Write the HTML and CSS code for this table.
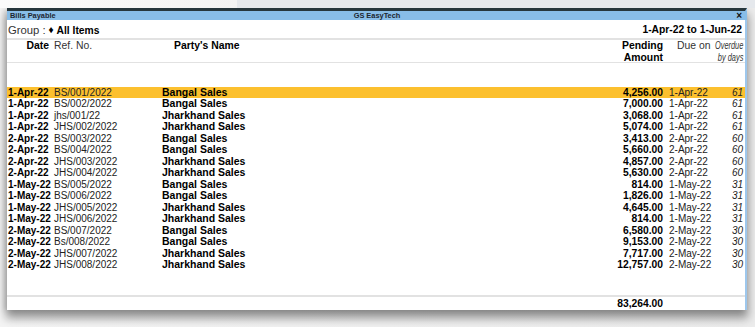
FILE: index.html
```html
<!DOCTYPE html>
<html>
<head>
<meta charset="utf-8">
<link rel="stylesheet" href="styles.css">
</head>
<body>
<div class="desk-top"><div class="desk-left"></div><div class="desk-right"></div></div>
<div class="window">
  <div class="titlebar">
    <span class="t-left">Bills Payable</span>
    <span class="t-center">GS EasyTech</span>
    <span class="t-right">×</span>
  </div>
  <div class="group-row">
    <div class="group"><span class="g-label">Group :</span> <span class="diamond">♦</span> <b>All Items</b></div>
    <div class="period">1-Apr-22 to 1-Jun-22</div>
  </div>
  <div class="sep"></div>
  <div class="grid head">
    <div class="h-date">Date</div>
    <div class="h-ref">Ref. No.</div>
    <div class="h-party">Party's Name</div>
    <div class="h-amt">Pending<br>Amount</div>
    <div class="h-due">Due on</div>
    <div class="h-over"><span>Overdue<br>by days</span></div>
  </div>
  <div class="sep thin"></div>
  <div class="body">
    <div class="grid row sel"><div class="c-date">1-Apr-22</div><div class="c-ref">BS/001/2022</div><div class="c-party">Bangal Sales</div><div class="c-amt">4,256.00</div><div class="c-due">1-Apr-22</div><div class="c-over">61</div></div>
    <div class="grid row"><div class="c-date">1-Apr-22</div><div class="c-ref">BS/002/2022</div><div class="c-party">Bangal Sales</div><div class="c-amt">7,000.00</div><div class="c-due">1-Apr-22</div><div class="c-over">61</div></div>
    <div class="grid row"><div class="c-date">1-Apr-22</div><div class="c-ref">jhs/001/22</div><div class="c-party">Jharkhand Sales</div><div class="c-amt">3,068.00</div><div class="c-due">1-Apr-22</div><div class="c-over">61</div></div>
    <div class="grid row"><div class="c-date">1-Apr-22</div><div class="c-ref">JHS/002/2022</div><div class="c-party">Jharkhand Sales</div><div class="c-amt">5,074.00</div><div class="c-due">1-Apr-22</div><div class="c-over">61</div></div>
    <div class="grid row"><div class="c-date">2-Apr-22</div><div class="c-ref">BS/003/2022</div><div class="c-party">Bangal Sales</div><div class="c-amt">3,413.00</div><div class="c-due">2-Apr-22</div><div class="c-over">60</div></div>
    <div class="grid row"><div class="c-date">2-Apr-22</div><div class="c-ref">BS/004/2022</div><div class="c-party">Bangal Sales</div><div class="c-amt">5,660.00</div><div class="c-due">2-Apr-22</div><div class="c-over">60</div></div>
    <div class="grid row"><div class="c-date">2-Apr-22</div><div class="c-ref">JHS/003/2022</div><div class="c-party">Jharkhand Sales</div><div class="c-amt">4,857.00</div><div class="c-due">2-Apr-22</div><div class="c-over">60</div></div>
    <div class="grid row"><div class="c-date">2-Apr-22</div><div class="c-ref">JHS/004/2022</div><div class="c-party">Jharkhand Sales</div><div class="c-amt">5,630.00</div><div class="c-due">2-Apr-22</div><div class="c-over">60</div></div>
    <div class="grid row"><div class="c-date">1-May-22</div><div class="c-ref">BS/005/2022</div><div class="c-party">Bangal Sales</div><div class="c-amt">814.00</div><div class="c-due">1-May-22</div><div class="c-over">31</div></div>
    <div class="grid row"><div class="c-date">1-May-22</div><div class="c-ref">BS/006/2022</div><div class="c-party">Bangal Sales</div><div class="c-amt">1,826.00</div><div class="c-due">1-May-22</div><div class="c-over">31</div></div>
    <div class="grid row"><div class="c-date">1-May-22</div><div class="c-ref">JHS/005/2022</div><div class="c-party">Jharkhand Sales</div><div class="c-amt">4,645.00</div><div class="c-due">1-May-22</div><div class="c-over">31</div></div>
    <div class="grid row"><div class="c-date">1-May-22</div><div class="c-ref">JHS/006/2022</div><div class="c-party">Jharkhand Sales</div><div class="c-amt">814.00</div><div class="c-due">1-May-22</div><div class="c-over">31</div></div>
    <div class="grid row"><div class="c-date">2-May-22</div><div class="c-ref">BS/007/2022</div><div class="c-party">Bangal Sales</div><div class="c-amt">6,580.00</div><div class="c-due">2-May-22</div><div class="c-over">30</div></div>
    <div class="grid row"><div class="c-date">2-May-22</div><div class="c-ref">Bs/008/2022</div><div class="c-party">Bangal Sales</div><div class="c-amt">9,153.00</div><div class="c-due">2-May-22</div><div class="c-over">30</div></div>
    <div class="grid row"><div class="c-date">2-May-22</div><div class="c-ref">JHS/007/2022</div><div class="c-party">Jharkhand Sales</div><div class="c-amt">7,717.00</div><div class="c-due">2-May-22</div><div class="c-over">30</div></div>
    <div class="grid row"><div class="c-date">2-May-22</div><div class="c-ref">JHS/008/2022</div><div class="c-party">Jharkhand Sales</div><div class="c-amt">12,757.00</div><div class="c-due">2-May-22</div><div class="c-over">30</div></div>
  </div>
  <div class="sep"></div>
  <div class="grid total">
    <div></div><div></div><div></div>
    <div class="c-amt">83,264.00</div>
    <div></div><div></div>
  </div>
</div>
</body>
</html>
```

FILE: styles.css
```css
html, body {
  margin: 0;
  padding: 0;
}
body {
  width: 755px;
  height: 327px;
  overflow: hidden;
  background: linear-gradient(to right, #f4f4f4 0, #ececec 100%);
  font-family: "Liberation Sans", Arial, sans-serif;
  color: #000;
}
.desk-top {
  display: flex;
  height: 8px;
}
.desk-left {
  width: 237px;
  background: linear-gradient(to right, #fbfbfb, #f3f3f3);
}
.desk-right {
  flex: 1;
  background: #e5e8ec;
}
.window {
  margin-left: 7px;
  width: 738px;
  height: 299px;
  background: #fff;
  border-top: 3px solid #26363c;
  border-right: 2px solid #9ec7ec;
  display: flex;
  flex-direction: column;
  box-shadow: 0 7px 9px 1px rgba(0, 0, 0, 0.4), -3px 0 6px rgba(0, 0, 0, 0.12);
}
.titlebar {
  height: 9px;
  background: #88bde8;
  display: grid;
  grid-template-columns: 1fr auto 1fr;
  align-items: center;
  font-size: 7.4px;
  font-weight: bold;
  color: #1c2630;
  line-height: 9px;
  margin-right: -2px;
}
.t-left { padding-left: 3px; }
.t-center { text-align: center; }
.t-right {
  text-align: right;
  padding-right: 5px;
  font-size: 10px;
  line-height: 9px;
  color: #111;
}
.group-row {
  height: 17px;
  display: flex;
  justify-content: space-between;
  align-items: center;
  padding: 1px 3px 0 1px;
  font-size: 10.3px;
}
.g-label {
  font-size: 11.3px;
  color: #333;
}
.diamond {
  font-size: 10px;
  position: relative;
  top: -1px;
}
.period { font-weight: bold; }
.sep {
  height: 2px;
  background: #e2e2e2;
}
.sep.thin {
  height: 1px;
}
.grid {
  display: grid;
  grid-template-columns: 46px 108px 1fr 90px 52px 28px;
  padding-right: 2px;
  padding-left: 1px;
}
.head {
  height: 22px;
  font-size: 10.4px;
  line-height: 11.5px;
  align-items: start;
}
.h-date {
  font-weight: bold;
  text-align: right;
  padding-right: 5px;
}
.h-ref { color: #333; }
.h-party {
  font-weight: bold;
  padding-left: 12px;
}
.h-amt {
  font-weight: bold;
  text-align: right;
}
.h-due {
  color: #333;
  padding-left: 14px;
  white-space: nowrap;
}
.h-over {
  font-style: italic;
  color: #333;
  white-space: nowrap;
  font-size: 10px;
  display: flex;
  justify-content: flex-end;
  text-align: right;
}
.h-over span {
  display: block;
  flex: none;
  transform: scaleX(0.74);
  transform-origin: right top;
}
.body {
  flex: 1;
  padding-top: 24px;
}
.row {
  height: 11.47px;
  line-height: 11.47px;
  font-size: 10.3px;
  white-space: nowrap;
}
.row.sel {
  background: #fcc02e;
}
.c-date {
  font-weight: bold;
  font-size: 10px;
}
.c-ref {
  color: #222;
  font-size: 10px;
}
.c-party {
  font-weight: bold;
  font-size: 10.5px;
}
.c-amt {
  font-weight: bold;
  text-align: right;
}
.c-due {
  color: #222;
  padding-left: 6px;
  font-size: 10px;
}
.c-over {
  font-style: italic;
  text-align: right;
  color: #222;
  font-size: 10px;
}
.total {
  height: 13px;
  line-height: 13px;
  font-size: 10.3px;
}
```
